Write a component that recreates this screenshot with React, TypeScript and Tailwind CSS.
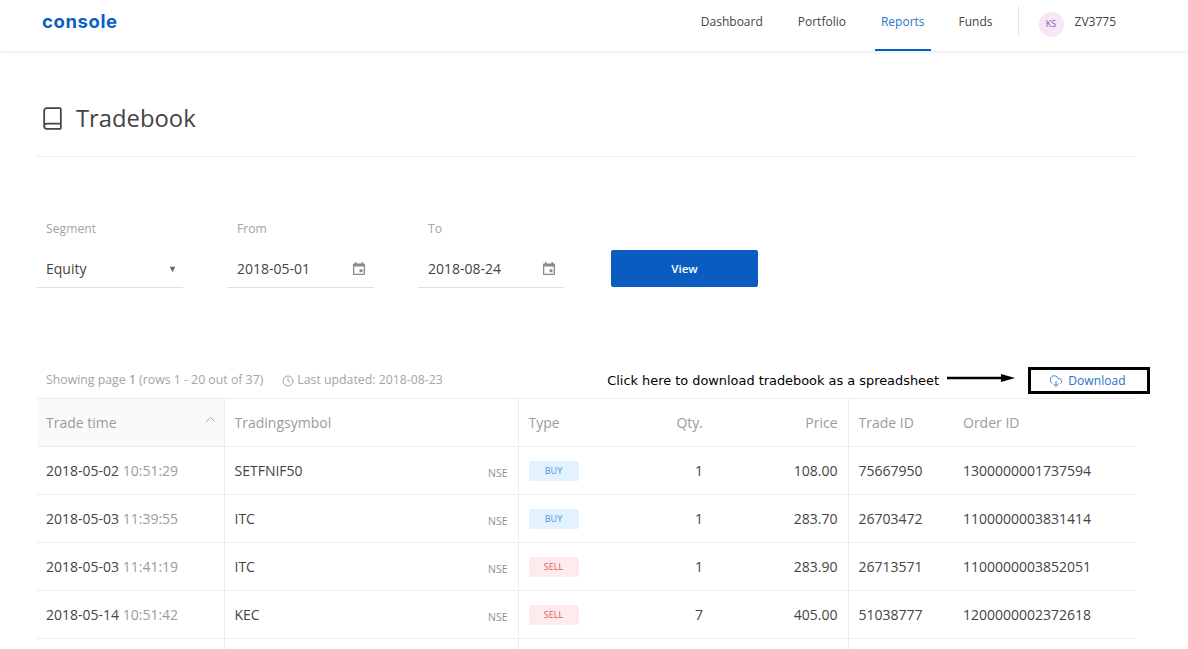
import React from 'react';
import { Book, ChevronUp, Clock, CloudDownload } from 'lucide-react';

interface Trade {
  date: string;
  time: string;
  symbol: string;
  type: 'BUY' | 'SELL';
  qty: number;
  price: string;
  tradeId: string;
  orderId: string;
}

const trades: Trade[] = [
  { date: '2018-05-02', time: '10:51:29', symbol: 'SETFNIF50', type: 'BUY', qty: 1, price: '108.00', tradeId: '75667950', orderId: '1300000001737594' },
  { date: '2018-05-03', time: '11:39:55', symbol: 'ITC', type: 'BUY', qty: 1, price: '283.70', tradeId: '26703472', orderId: '1100000003831414' },
  { date: '2018-05-03', time: '11:41:19', symbol: 'ITC', type: 'SELL', qty: 1, price: '283.90', tradeId: '26713571', orderId: '1100000003852051' },
  { date: '2018-05-14', time: '10:51:42', symbol: 'KEC', type: 'SELL', qty: 7, price: '405.00', tradeId: '51038777', orderId: '1200000002372618' },
];

const CalendarIcon = () => (
  <svg width="12" height="13" viewBox="0 0 12 13" className="text-[#8a8a8a]">
    <path
      fill="currentColor"
      d="M2 0h1.500v1.500h5V0H10v1.500h1c.6 0 1 .4 1 1V12c0 .6-.4 1-1 1H1c-.6 0-1-.4-1-1V2.500c0-.6.4-1 1-1h1V0zM1.300 4.500v7.200h9.400V4.500H1.300zM6.500 7.300h3v3h-3v-3z"
    />
  </svg>
);

const DateField = ({ label, value, width, gap }: { label: string; value: string; width: string; gap: string }) => (
  <div className={`${width} ${gap}`}>
    <div className="pl-[10px] text-[12.200px] leading-[16px] text-[#a5a5a5]">{label}</div>
    <div className="mt-[13px] flex h-[38px] items-center justify-between border-b border-[#e0e0e0] pl-[10px] pr-[9px] text-[14px] text-[#444444]">
      <span>{value}</span>
      <CalendarIcon />
    </div>
  </div>
);

export default function App() {
  return (
    <div className="h-[649px] overflow-hidden bg-white font-['Open_Sans',sans-serif] text-[#444444]">
      <header className="flex h-[51px] items-stretch justify-between bg-white pl-[42px] pr-[72px] shadow-[0_1px_4px_rgba(0,0,0,0.1)]">
        <div className="flex items-center pb-[7px] font-['Inter',sans-serif] text-[18.500px] font-bold tracking-[0.6px] text-[#0a5fc4]">
          console
        </div>
        <nav className="flex items-stretch text-[12px]">
          <a className="flex items-center px-[6px] pb-[8px]">Dashboard</a>
          <a className="ml-[23px] flex items-center px-[6px] pb-[8px]">Portfolio</a>
          <a className="ml-[23px] flex items-center border-b-2 border-[#0a5fc4] px-[6px] pb-[6px] text-[#2a75c9]">Reports</a>
          <a className="ml-[22px] flex items-center px-[6px] pb-[8px]">Funds</a>
          <div className="ml-[19px] mt-[6px] h-[30px] w-px bg-[#e4e4e4]" />
          <div className="ml-[20px] flex items-center gap-[11px] pb-[3px]">
            <span className="flex h-[25px] w-[25px] items-center justify-center rounded-full bg-[#f6e6f6] text-[9px] text-[#8e5a9e]">
              KS
            </span>
            <span className="pb-[5px]">ZV3775</span>
          </div>
        </nav>
      </header>

      <main className="mx-[37px] w-[1099px]">
        <div className="flex h-[106px] items-center gap-[11px] border-b border-[#eeeeee] pl-[3px] pt-[29px]">
          <Book size={25} strokeWidth={1.7} className="text-[#444444]" />
          <h1 className="text-[23.800px] font-normal leading-[32px]">Tradebook</h1>
        </div>

        <div className="mt-[64px] flex items-start">
          <div className="w-[146px]">
            <div className="pl-[9px] text-[12.200px] leading-[16px] text-[#a5a5a5]">Segment</div>
            <div className="mt-[13px] flex h-[38px] items-center justify-between border-b border-[#e0e0e0] pl-[9px] pr-[6px] text-[14px]">
              <span>Equity</span>
              <span className="text-[9px] text-[#666666]">▼</span>
            </div>
          </div>
          <DateField label="From" value="2018-05-01" width="w-[147px]" gap="ml-[44px]" />
          <DateField label="To" value="2018-08-24" width="w-[146px]" gap="ml-[44px]" />
          <button className="ml-[47px] mt-[29px] h-[37px] w-[147px] rounded-[2px] bg-[#0a5cc0] text-[11.500px] font-semibold text-white">
            View
          </button>
        </div>

        <div className="mt-[73px] flex h-[37px] items-center justify-between pt-[2px]">
          <div className="flex items-center pl-[9px] text-[12.300px] text-[#a5a5a5]">
            <span>Showing page <span className="text-[#888888]">1</span> (rows 1 - 20 out of 37)</span>
            <Clock size={12} strokeWidth={1.5} className="ml-[19px] mr-[3px] text-[#8a8a8a]" />
            <span>Last updated: 2018-08-23</span>
          </div>
          <div className="-mr-[14px] flex items-center">
            <span className="font-['DejaVu_Sans',sans-serif] text-[12.900px] text-black">
              Click here to download tradebook as a spreadsheet
            </span>
            <svg width="69" height="10" viewBox="0 0 69 10" className="mb-[6px] ml-[8px]">
              <path d="M0 5h56" stroke="black" strokeWidth="2.500" />
              <path d="M54 1l14 4-14 4z" fill="black" />
            </svg>
            <button className="ml-[12px] flex h-[27px] w-[122px] items-center justify-center gap-[5px] border-[3px] border-black pr-[3px] text-[12px] font-medium tracking-[0.1px] text-[#2a6fc9]">
              <CloudDownload size={14} strokeWidth={1.5} />
              Download
            </button>
          </div>
        </div>

        <table className="w-[1099px] table-fixed border-collapse text-[14px]">
          <colgroup>
            <col className="w-[187px]" />
            <col className="w-[294px]" />
            <col className="w-[100px]" />
            <col className="w-[85px]" />
            <col className="w-[145px]" />
            <col className="w-[105px]" />
            <col />
          </colgroup>
          <thead>
            <tr className="h-[48px] border-y border-[#eeeeee] text-[14px] text-[#9b9b9b]">
              <th className="relative border-r border-[#eeeeee] bg-[#fafafa] pl-[9px] text-left font-normal">
                Trade time
                <ChevronUp size={17} strokeWidth={1.2} className="absolute right-[5px] top-[12px] text-[#9b9b9b]" />
              </th>
              <th className="border-r border-[#eeeeee] pl-[10px] text-left font-normal">Tradingsymbol</th>
              <th className="pl-[10px] text-left font-normal">Type</th>
              <th className="text-right font-normal">Qty.</th>
              <th className="border-r border-[#eeeeee] pr-[10px] text-right font-normal">Price</th>
              <th className="pl-[10px] text-left font-normal">Trade ID</th>
              <th className="pl-[10px] text-left font-normal">Order ID</th>
            </tr>
          </thead>
          <tbody>
            {trades.map((t) => (
              <tr key={t.tradeId} className="h-[48px] border-b border-[#eeeeee]">
                <td className="border-r border-[#eeeeee] pl-[9px]">
                  {t.date} <span className="text-[#9b9b9b]">{t.time}</span>
                </td>
                <td className="border-r border-[#eeeeee] pl-[10px] pr-[10px]">
                  <div className="flex items-center justify-between">
                    <span>{t.symbol}</span>
                    <span className="mt-[6px] text-[10.500px] font-medium text-[#8f8f8f]">NSE</span>
                  </div>
                </td>
                <td className="pl-[10px]">
                  <span
                    className={`flex h-[20px] w-[50px] items-center justify-center rounded-[2px] text-[9px] ${
                      t.type === 'BUY' ? 'bg-[#e3f2fd] text-[#3a9be8]' : 'bg-[#feecec] text-[#e9505a]'
                    }`}
                  >
                    {t.type}
                  </span>
                </td>
                <td className="text-right">{t.qty}</td>
                <td className="border-r border-[#eeeeee] pr-[10px] text-right">{t.price}</td>
                <td className="pl-[10px]">{t.tradeId}</td>
                <td className="pl-[10px]">{t.orderId}</td>
              </tr>
            ))}
            <tr className="h-[48px]">
              <td className="border-r border-[#eeeeee]" />
              <td className="border-r border-[#eeeeee]" />
              <td />
              <td />
              <td className="border-r border-[#eeeeee]" />
              <td />
              <td />
            </tr>
          </tbody>
        </table>
      </main>
    </div>
  );
}
